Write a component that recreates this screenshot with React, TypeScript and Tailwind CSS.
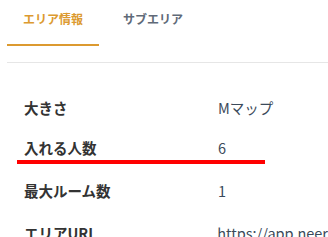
export default function App() {
  return (
    <div className="w-[328px] h-[237px] bg-white overflow-hidden relative" style={{ fontFamily: '"Noto Sans CJK JP", "Noto Sans", sans-serif' }}>
      <div className="flex pl-[7px] pt-[10px]">
        <div className="w-[92px] flex flex-col items-center">
          <span className="text-[12px] font-bold text-[#dc9a30] leading-[18px]">エリア情報</span>
          <div className="mt-[16px] h-[2px] w-full bg-[#dc9a30]" />
        </div>
        <div className="ml-[24px] text-[12px] font-bold text-[#606a78] leading-[18px]">サブエリア</div>
      </div>
      <div className="ml-[7px] mt-[16px] h-px bg-[#e6e6e6]" />
      <div className="pl-[24px] pt-[26px] text-[14.5px] text-[#333]">
        <div className="flex h-[38px] items-center">
          <span className="w-[194px] font-bold">大きさ</span>
          <span className="text-[#3b4a5a]">Mマップ</span>
        </div>
        <div className="flex h-[42px] items-center">
          <span className="w-[194px] font-bold">入れる人数</span>
          <span className="text-[#3b4a5a]">6</span>
        </div>
        <div className="flex h-[44px] items-center">
          <span className="w-[194px] font-bold">最大ルーム数</span>
          <span className="text-[#3b4a5a]">1</span>
        </div>
        <div className="flex h-[40px] items-center">
          <span className="w-[194px] font-bold whitespace-nowrap">エリアURL</span>
          <span className="text-[#3b4a5a] whitespace-nowrap">https://app.neer</span>
        </div>
      </div>
      <div className="absolute left-[17px] top-[160px] w-[248px] h-[4px] bg-[#ff0000]" />
    </div>
  );
}
